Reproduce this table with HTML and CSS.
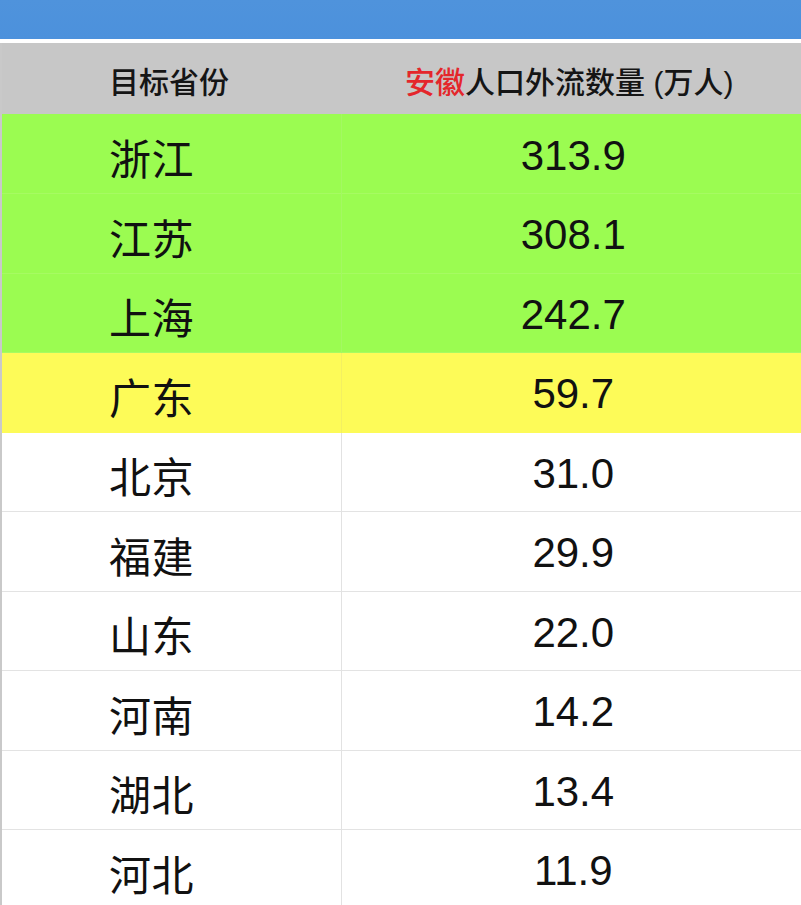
FILE: index.html
```html
<!DOCTYPE html>
<html lang="zh-CN">
<head>
<meta charset="utf-8">
<title>安徽人口外流数量</title>
<link rel="stylesheet" href="styles.css">
</head>
<body>
<div class="topbar"></div>
<table class="data">
  <thead>
    <tr class="head">
      <th class="name">目标省份</th>
      <th class="num"><span class="red">安徽</span>人口外流数量 (万人)</th>
    </tr>
  </thead>
  <tbody>
    <tr class="green"><td class="name">浙江</td><td class="num">313.9</td></tr>
    <tr class="green"><td class="name">江苏</td><td class="num">308.1</td></tr>
    <tr class="green"><td class="name">上海</td><td class="num">242.7</td></tr>
    <tr class="yellow"><td class="name">广东</td><td class="num">59.7</td></tr>
    <tr><td class="name">北京</td><td class="num">31.0</td></tr>
    <tr><td class="name">福建</td><td class="num">29.9</td></tr>
    <tr><td class="name">山东</td><td class="num">22.0</td></tr>
    <tr><td class="name">河南</td><td class="num">14.2</td></tr>
    <tr><td class="name">湖北</td><td class="num">13.4</td></tr>
    <tr><td class="name">河北</td><td class="num">11.9</td></tr>
  </tbody>
</table>
</body>
</html>
```
FILE: styles.css
```css
html, body {
  margin: 0;
  padding: 0;
  background: #ffffff;
  overflow: hidden;
}
body {
  font-family: "Liberation Sans", "Noto Sans CJK SC", sans-serif;
  color: #111111;
}
.topbar {
  height: 39px;
  background: linear-gradient(to bottom, #4f93dc, #4c91dc);
  margin-bottom: 4px;
}
.data {
  width: 801px;
  border-collapse: collapse;
  table-layout: fixed;
  border-left: 2px solid #c9c9c9;
}
.data th, .data td {
  padding: 0;
  box-sizing: border-box;
}
.data .name {
  width: 340px;
  text-align: left;
  padding-left: 107px;
  border-right: 1px solid #e2e2e2;
}
.data .num {
  text-align: center;
}
.head {
  height: 71px;
  background: #c7c7c7;
}
.head th {
  font-size: 30px;
  font-weight: 500;
  color: #151515;
  padding-top: 2px;
  border-right-color: #c7c7c7 !important;
}
.head .num {
  padding-right: 4px;
}
.red {
  color: #e4262b;
}
tbody tr {
  height: 79.5px;
  border-bottom: 1px solid #e3e3e3;
}
tbody td {
  vertical-align: middle;
  padding-top: 6px !important;
}
tbody td.name {
  font-size: 42px;
  font-weight: 400;
  font-family: "Noto Sans CJK SC", sans-serif;
  padding-top: 6px !important;
  letter-spacing: 0.5px;
}
tbody td.num {
  font-size: 42px;
  padding-left: 4px;
  padding-top: 4px !important;
}
tr.green {
  background: #9bfc51;
  border-bottom-color: #a6fb62;
}
tr.green td.name {
  border-right-color: #a3f862;
}
tr.yellow {
  background: #fdfb58;
  border-bottom-color: #fdfb58;
}
tr.yellow td.name {
  border-right-color: #f3f061;
}
```
